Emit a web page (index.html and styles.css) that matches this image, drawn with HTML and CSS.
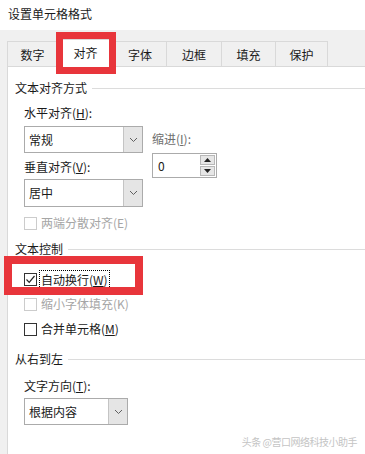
FILE: index.html
```html
<!DOCTYPE html>
<html lang="zh-CN">
<head>
<meta charset="utf-8">
<title>设置单元格格式</title>
<link rel="stylesheet" href="styles.css">
</head>
<body>
<div class="title">设置单元格格式</div>
<div class="dialog">
  <div class="tabs">
    <div class="tab t1">数字</div>
    <div class="tab t2 active">对齐</div>
    <div class="tab t3">字体</div>
    <div class="tab t4">边框</div>
    <div class="tab t5">填充</div>
    <div class="tab t6">保护</div>
  </div>
  <div class="panel">
    <div class="group g1"><span>文本对齐方式</span><i class="rule"></i></div>
    <div class="align-row">
      <div class="col-left">
        <div class="label">水平对齐(<u>H</u>):</div>
        <div class="combo wide"><span class="val">常规</span><span class="btn"><svg width="9" height="6" viewBox="0 0 9 6"><polyline points="1,1 4.5,4.5 8,1" fill="none" stroke="#606060" stroke-width="1"/></svg></span></div>
        <div class="label lv">垂直对齐(<u>V</u>):</div>
        <div class="combo wide c2"><span class="val">居中</span><span class="btn"><svg width="9" height="6" viewBox="0 0 9 6"><polyline points="1,1 4.5,4.5 8,1" fill="none" stroke="#606060" stroke-width="1"/></svg></span></div>
      </div>
      <div class="col-right">
        <div class="label dim">缩进(<u>I</u>):</div>
        <div class="spin"><span class="val">0</span>
          <span class="spin-btns">
            <span class="sb"><svg width="7" height="4" viewBox="0 0 7 4"><polygon points="0,4 3.5,0 7,4" fill="#222"/></svg></span>
            <span class="sb"><svg width="7" height="4" viewBox="0 0 7 4"><polygon points="0,0 3.5,4 7,0" fill="#222"/></svg></span>
          </span>
        </div>
      </div>
    </div>
    <div class="check disabled r-dist"><span class="box"></span><span class="txt">两端分散对齐(E)</span></div>
    <div class="group g2"><span>文本控制</span><i class="rule"></i></div>
    <div class="check r-wrap"><span class="box"><svg width="11" height="11" viewBox="0 0 11 11"><polyline points="1.5,5.5 4.2,8.3 9.5,2" fill="none" stroke="#222" stroke-width="1.2"/></svg></span><span class="txt focus">自动换行(<u>W</u>)</span></div>
    <div class="check disabled r-shrink"><span class="box"></span><span class="txt">缩小字体填充(K)</span></div>
    <div class="check r-merge"><span class="box"></span><span class="txt">合并单元格(<u>M</u>)</span></div>
    <div class="group g3"><span>从右到左</span><i class="rule"></i></div>
    <div class="label lt">文字方向(<u>T</u>):</div>
    <div class="combo narrow"><span class="val">根据内容</span><span class="btn"><svg width="9" height="6" viewBox="0 0 9 6"><polyline points="1,1 4.5,4.5 8,1" fill="none" stroke="#606060" stroke-width="1"/></svg></span></div>
    <div class="watermark">头条 @营口网络科技小助手</div>
  </div>
</div>
<div class="mark mark-tab"></div>
<div class="mark mark-wrap"></div>
</body>
</html>
```

FILE: styles.css
```css
* { box-sizing: border-box; }
html, body { margin: 0; padding: 0; }
body {
  width: 365px;
  height: 454px;
  overflow: hidden;
  background: #ffffff;
  font-family: "Noto Sans CJK SC", "Microsoft YaHei", sans-serif;
  font-size: 12px;
  color: #1a1a1a;
  position: relative;
}
u { text-decoration: underline; text-underline-offset: 1px; }

.title {
  height: 30px;
  line-height: 28px;
  padding-left: 8px;
  background: #ffffff;
}

.dialog {
  background: #f0f0f0;
  padding: 11px 0 0 7px;
  height: 424px;
}

.tabs {
  display: flex;
  height: 25px;
  align-items: flex-end;
}
.tab {
  height: 25px;
  line-height: 25px;
  text-align: center;
  background: #f0f0f0;
  border: 1px solid #d9d9d9;
  border-bottom: none;
  border-left: none;
}
.tab.t1 { border-left: 1px solid #d9d9d9; width: 51px; }
.tab.t2 { width: 56px; }
.tab.t3 { width: 53px; }
.tab.t4 { width: 55px; }
.tab.t5 { width: 54px; }
.tab.t6 { width: 52px; }
.tab.active {
  background: #ffffff;
  height: 28px;
  line-height: 26px;
  margin-bottom: -1px;
  position: relative;
  z-index: 1;
}

.panel {
  background: #ffffff;
  border-top: 1px solid #d9d9d9;
  border-left: 1px solid #d9d9d9;
  height: 388px;
  padding: 12px 0 0 7px;
}

.group {
  display: flex;
  align-items: center;
  height: 18px;
  line-height: 18px;
}
.group .rule {
  flex: 1;
  height: 1px;
  background: #dcdcdc;
  margin-left: 5px;
}
.g2 { margin-top: 8px; }
.g3 { margin-top: 12px; }

.label {
  height: 18px;
  line-height: 18px;
  white-space: nowrap;
}
.label.dim { color: #6e6e6e; }

.align-row {
  display: flex;
  margin-top: 7px;
  padding-left: 9px;
}
.col-left { width: 119px; display: flex; flex-direction: column; }
.col-right { margin-left: 9px; padding-top: 26px; display: flex; flex-direction: column; }

.combo {
  display: flex;
  height: 27px;
  border: 1px solid #ababab;
  background: #ffffff;
  margin-top: 4px;
}
.combo .val { flex: 1; line-height: 25px; padding-left: 4px; }
.combo .btn {
  width: 19px;
  background: #e5e5e5;
  border-left: 1px solid #c4c4c4;
  display: flex;
  align-items: center;
  justify-content: center;
}
.combo.wide { width: 119px; }
.combo.c2 { margin-top: 3px; height: 28px; }
.label.lv { margin-top: 5px; }

.spin {
  margin-top: 5px;
  width: 65px;
  height: 25px;
  border: 1px solid #ababab;
  display: flex;
  align-items: stretch;
  padding: 1px 1px 1px 0;
}
.spin .val { flex: 1; line-height: 21px; padding-left: 5px; }
.spin-btns {
  width: 15px;
  display: flex;
  flex-direction: column;
  gap: 1px;
}
.sb {
  flex: 1;
  background: #e6e6e6;
  border: 1px solid #b8b8b8;
  display: flex;
  align-items: center;
  justify-content: center;
}

.check {
  display: flex;
  align-items: center;
  height: 18px;
  padding-left: 9px;
}
.check .box {
  width: 13px;
  height: 13px;
  border: 1px solid #333333;
  background: #ffffff;
  display: flex;
  align-items: center;
  justify-content: center;
}
.check .txt { margin-left: 4px; line-height: 16px; }
.check.disabled .box { border-color: #cccccc; }
.check.disabled .txt { color: #a6a6a6; }
.r-dist { margin-top: 7px; }
.r-wrap { margin-top: 12px; height: 19px; }
.r-wrap .txt.focus {
  border: 1px dotted #000000;
  padding: 0 1px;
  margin-left: 2px;
  line-height: 17px;
}
.r-shrink { margin-top: 6px; }
.r-merge { margin-top: 7px; }

.label.lt { margin-top: 9px; padding-left: 9px; }
.combo.narrow { width: 104px; margin-left: 9px; margin-top: 3px; }

.watermark {
  margin-top: 9px;
  text-align: right;
  padding-right: 8px;
  font-size: 10px;
  color: #c4c4c4;
  letter-spacing: -0.5px;
}

.mark {
  position: absolute;
  border-style: solid;
  border-color: #e8353b;
  z-index: 5;
}
.mark-tab { left: 56px; top: 32px; width: 60px; height: 42px; border-width: 7px; }
.mark-wrap { left: 4px; top: 256px; width: 139px; height: 39px; border-width: 8px; }
```
